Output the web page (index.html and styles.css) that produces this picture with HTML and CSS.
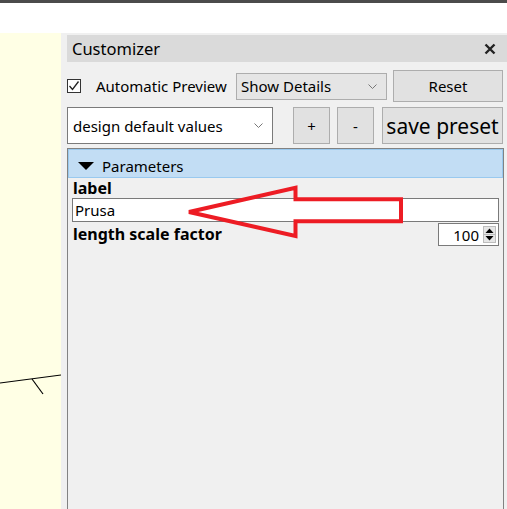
FILE: index.html
```html
<!DOCTYPE html>
<html>
<head>
<meta charset="utf-8">
<link rel="stylesheet" href="styles.css">
</head>
<body>
<div class="topbar"></div>
<div class="toolbar"></div>
<div class="main">
  <div class="viewport">
    <svg class="axes" width="61" height="476" viewBox="0 0 61 476">
      <line x1="0" y1="350" x2="61" y2="342" stroke="#000" stroke-width="1.2"/>
      <line x1="32" y1="346" x2="43" y2="361" stroke="#000" stroke-width="1.2"/>
    </svg>
  </div>
  <div class="dock">
    <div class="dock-title">
      <span>Customizer</span>
      <svg class="close" width="12" height="12" viewBox="0 0 12 12">
        <path d="M1.5 1.5 L10.5 10.5 M10.5 1.5 L1.5 10.5" stroke="#222" stroke-width="2.4"/>
      </svg>
    </div>
    <div class="row1">
      <label class="auto">
        <span class="checkbox">
          <svg width="14" height="14" viewBox="0 0 14 14">
            <path d="M2.5 7 L5.5 10.5 L11.5 2.5" fill="none" stroke="#222" stroke-width="1.3"/>
          </svg>
        </span>
        <span>Automatic Preview</span>
      </label>
      <div class="combo details">
        <span>Show Details</span>
        <svg width="9" height="5" viewBox="0 0 9 5"><path d="M0.5 0.5 L4.5 4.5 L8.5 0.5" fill="none" stroke="#777" stroke-width="1"/></svg>
      </div>
      <div class="btn reset">Reset</div>
    </div>
    <div class="row2">
      <div class="combo preset">
        <span>design default values</span>
        <svg width="9" height="5" viewBox="0 0 9 5"><path d="M0.5 0.5 L4.5 4.5 L8.5 0.5" fill="none" stroke="#777" stroke-width="1"/></svg>
      </div>
      <div class="btn small plus">+</div>
      <div class="btn small minus">-</div>
      <div class="btn save">save preset</div>
    </div>
    <div class="frame">
      <div class="group-header">
        <svg class="tri" width="16" height="8" viewBox="0 0 16 8"><path d="M0 0 H16 L8 8 Z" fill="#000"/></svg>
        <span>Parameters</span>
      </div>
      <div class="params">
        <div class="pname">label</div>
        <div class="textinput">Prusa</div>
        <div class="prow">
          <div class="pname">length scale factor</div>
          <div class="spin">
            <span class="spinval">100</span>
            <span class="spinbtns">
              <svg width="13" height="17" viewBox="0 0 13 17">
                <rect x="0.5" y="0.5" width="12" height="16" fill="#e6e6e6" stroke="#bdbdbd"/>
                <path d="M2.5 7 L6.5 2.5 L10.5 7 Z" fill="#000"/>
                <path d="M2.5 10 L6.5 14.5 L10.5 10 Z" fill="#000"/>
                <line x1="1" y1="8.5" x2="12" y2="8.5" stroke="#bdbdbd"/>
              </svg>
            </span>
          </div>
        </div>
      </div>
    </div>
  </div>
</div>
<svg class="annot" width="507" height="509" viewBox="0 0 507 509">
  <path d="M189 212 L295.5 187.7 L295.5 199.3 L401 199.3 L401 221.3 L295.5 221.3 L295.5 236 Z" fill="none" stroke="#ed1c24" stroke-width="4" stroke-linejoin="miter"/>
</svg>
</body>
</html>
```
FILE: styles.css
```css
* { box-sizing: border-box; }
html, body { margin: 0; padding: 0; }
body {
  width: 507px;
  height: 509px;
  overflow: hidden;
  position: relative;
  background: #f0f0f0;
  font-family: "Noto Sans", "DejaVu Sans", sans-serif;
  font-size: 15px;
  color: #000;
}
.topbar { height: 3px; background: #4b4b4b; }
.toolbar { height: 30px; background: #fff; }
.main { display: flex; height: 476px; }
.viewport { width: 61px; background: #ffffe5; flex: none; }
.axes { display: block; }
.dock { flex: 1; padding-left: 6px; display: flex; flex-direction: column; }
.dock-title {
  margin-top: 2px;
  height: 27px;
  background: #dadada;
  display: flex;
  align-items: center;
  justify-content: space-between;
  padding: 0 11px 0 5px;
  font-size: 16.5px;
}
.close { display: block; }
.row1 {
  margin-top: 8px;
  height: 32px;
  display: flex;
  align-items: center;
}
.auto { width: 169px; display: flex; align-items: center; gap: 15px; flex: none; }
.checkbox {
  width: 14px; height: 14px;
  border: 1px solid #333;
  background: #fff;
  display: flex;
}
.checkbox svg { display: block; margin: -1px; }
.combo {
  display: flex;
  align-items: center;
  justify-content: space-between;
  flex: none;
}
.details {
  width: 151px; height: 27px;
  background: #e5e5e5;
  border: 1px solid #adadad;
  padding: 0 9px 0 4px;
}
.btn {
  background: #e1e1e1;
  border: 1px solid #adadad;
  display: flex;
  align-items: center;
  justify-content: center;
  flex: none;
}
.reset { width: 110px; height: 32px; margin-left: 6px; }
.row2 { margin-top: 5px; height: 37px; display: flex; }
.preset {
  width: 206px; height: 37px;
  background: #fff;
  border: 1px solid #7a7a7a;
  padding: 0 9px 0 5px;
}
.small { width: 37px; height: 37px; }
.plus { margin-left: 20px; }
.minus { margin-left: 7px; }
.save { width: 121px; height: 37px; margin-left: 8px; font-size: 21px; }
.frame {
  margin-top: 4px;
  margin-right: 3px;
  flex: 1;
  border: 1px solid #828282;
  border-bottom: none;
}
.group-header {
  height: 29px;
  background: #c2ddf4;
  border: 1px solid #99c9ef;
  display: flex;
  align-items: center;
  padding: 4px 0 0 9px;
  gap: 8px;
}
.tri { display: block; margin-top: 1px; }
.params { padding: 0 4px; }
.pname { font-weight: bold; font-size: 16px; height: 20px; line-height: 20px; padding-left: 1px; }
.textinput {
  height: 24px;
  background: #fff;
  border: 1px solid #7a7a7a;
  padding-left: 2px;
  line-height: 22px;
}
.prow { display: flex; justify-content: space-between; align-items: flex-start; }
.prow .pname { margin-top: 2px; }
.spin {
  margin-top: 1px;
  width: 61px; height: 23px;
  background: #fff;
  border: 1px solid #7a7a7a;
  display: flex;
  align-items: center;
  justify-content: flex-end;
  padding-right: 2px;
  gap: 4px;
}
.spinbtns svg { display: block; }
.annot { position: absolute; left: 0; top: 0; pointer-events: none; }
```
